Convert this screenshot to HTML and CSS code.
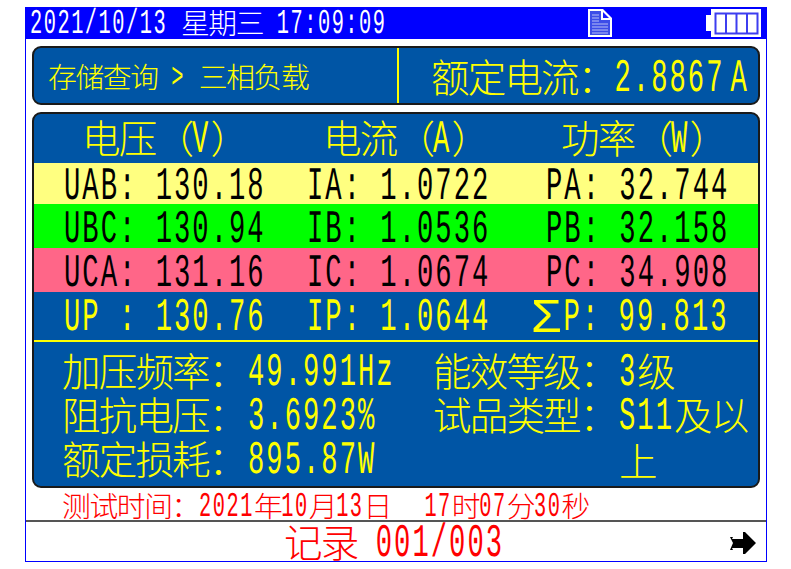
FILE: index.html
```html
<!DOCTYPE html>
<html lang="zh">
<head>
<meta charset="utf-8">
<title>三相负载</title>
<link rel="stylesheet" href="styles.css">
</head>
<body>
<div class="frame">
  <header class="topbar t-sm">
    <div class="clock"><span class="m">2021/10/13 </span>星期三<span class="m"> 17:09:09</span></div>
    <svg class="doc" width="24" height="28" viewBox="0 0 24 28">
      <path d="M0 0H15L24 9V28H0Z" fill="#fff"/>
      <path d="M2 2H13V11H22V26H2Z" fill="#3d4de8"/>
      <path d="M15 3L21 9H15Z" fill="#1a1aff"/>
      <path d="M4 6H11M4 9H11M4 12H11M4 15H20M4 18H20M4 21H20M4 24H20" stroke="#b9c0f5" stroke-width="1"/>
    </svg>
    <svg class="bat" width="55" height="28" viewBox="0 0 55 28">
      <path d="M5 0H55V28H5V22H0V6H5Z" fill="#fff"/>
      <path d="M9.500 4.500H51.500V24.500H9.500ZM20 4.500V24.500M30.500 4.500V24.500M41 4.500V24.500" fill="none" stroke="#3d3df0" stroke-width="2"/>
    </svg>
  </header>

  <section class="panel title">
    <div class="crumb t-sm">存储查询<span class="m"> &gt; </span>三相负载</div>
    <div class="rated t-lg">额定电流：<span class="m">2.8867</span><span class="m unit">A</span></div>
  </section>

  <section class="panel data t-lg">
    <div class="heads">
      <div>电压（<span class="m">V</span>）</div>
      <div>电流（<span class="m">A</span>）</div>
      <div>功率（<span class="m">W</span>）</div>
    </div>
    <div class="row yellow"><div><span class="m">UAB: 130.18</span></div><div><span class="m">IA: 1.0722</span></div><div><span class="m">PA: 32.744</span></div></div>
    <div class="row green"><div><span class="m">UBC: 130.94</span></div><div><span class="m">IB: 1.0536</span></div><div><span class="m">PB: 32.158</span></div></div>
    <div class="row pink"><div><span class="m">UCA: 131.16</span></div><div><span class="m">IC: 1.0674</span></div><div><span class="m">PC: 34.908</span></div></div>
    <div class="row sum"><div><span class="m">UP : 130.76</span></div><div><span class="m">IP: 1.0644</span></div><div><span class="sigma">Σ</span><span class="m">P: 99.813</span></div></div>
    <div class="info">
      <div class="info-col">
        <div class="item"><span>加压频率：</span><span><span class="m">49.991Hz</span></span></div>
        <div class="item"><span>阻抗电压：</span><span><span class="m">3.6923%</span></span></div>
        <div class="item"><span>额定损耗：</span><span><span class="m">895.87W</span></span></div>
      </div>
      <div class="info-col">
        <div class="item"><span>能效等级：</span><span><span class="m">3</span>级</span></div>
        <div class="item"><span>试品类型：</span><span class="wrap"><span class="m">S11</span>及以上</span></div>
      </div>
    </div>
  </section>

  <div class="testtime t-sm">测试时间：<span class="m">2021</span>年<span class="m">10</span>月<span class="m">13</span>日<span class="m gap">  17</span>时<span class="m">07</span>分<span class="m">30</span>秒</div>

  <footer class="record t-lg">
    <div>记录<span class="m"> 001/003</span></div>
    <svg class="arrow" width="26" height="22" viewBox="0 0 26 22">
      <path d="M0 5H3L2 7H13V0H15L26 11L15 22H13V16H2L3 18H0L3 11Z" fill="#000"/>
    </svg>
  </footer>
</div>
</body>
</html>
```
FILE: styles.css
```css
* { box-sizing: border-box; }
html, body { margin: 0; padding: 0; background: #fff; }
body { font-family: "Noto Sans CJK SC", "Liberation Sans", sans-serif; font-weight: 300; }

.frame {
  width: 742px;
  height: 555px;
  margin: 7px 0 0 25px;
  border: 1px solid #0000ff;
  border-top: 0;
  display: flex;
  flex-direction: column;
}

.t-sm { font-size: 28.8px; letter-spacing: -1.4px; }
.t-lg { font-size: 38.5px; letter-spacing: -1.8px; }

.m {
  display: inline-block;
  font-family: "Liberation Mono", monospace;
  font-weight: 400;
  font-size: 0.706em;
  letter-spacing: 0.0746em;
  line-height: 1;
  white-space: pre;
  text-rendering: geometricPrecision;
  transform: scaleY(1.72);
  transform-origin: 0 76.7%;
}

.topbar {
  height: 32px;
  flex: none;
  background: #0000ff;
  color: #fff;
  padding: 0 6px 0 5px;
  display: flex;
  align-items: center;
  line-height: 32px;
  margin: 0 -1px;
}
.clock { white-space: nowrap; }
.doc { margin-left: auto; margin-right: 94px; }
.bat { flex: none; }

.panel {
  margin: 0 6px;
  background: #0055a5;
  border: 2px solid #1a1a1a;
  border-radius: 9px;
  color: #ffff00;
}

.title {
  flex: none;
  height: 59px;
  margin-top: 7px;
  display: flex;
  align-items: center;
}
.crumb { flex: none; width: 363px; padding-left: 14px; line-height: 57px; white-space: nowrap; }
.rated {
  flex: 1;
  min-width: 0;
  height: 55px;
  line-height: 55px;
  border-left: 2px solid #ffff00;
  padding-left: 32px;
  white-space: nowrap;
}
.unit { margin-left: 6px; }

.data {
  flex: none;
  height: 376px;
  margin-top: 7px;
  overflow: hidden;
}
.heads {
  height: 49px;
  line-height: 45px;
  display: grid;
  grid-template-columns: 241px 238px 1fr;
  padding-left: 48px;
}
.row {
  display: grid;
  grid-template-columns: 243px 239px 1fr;
  padding-left: 30px;
  height: 44px;
  line-height: 44px;
  color: #000;
  white-space: nowrap;
}
.yellow { background: #ffff80; height: 41px; line-height: 40px; }
.green { background: #00ff00; }
.pink { background: #ff6688; }
.row.sum {
  color: #ffff00;
  height: 50px;
  line-height: 44px;
  border-bottom: 2px solid #ffff00;
  grid-template-columns: 243px 220px 1fr;
}
.sigma {
  display: inline-block;
  width: 0.95em;
  text-align: center;
  font-family: "Liberation Sans", sans-serif;
  transform: scale(1.3, 1.2);
  transform-origin: 50% 70%;
  line-height: 1;
}

.info {
  display: flex;
  padding: 5px 0 0 28px;
  line-height: 44px;
}
.info-col { flex: none; width: 371px; }
.item { display: flex; height: 44px; }
.item > span:first-child { flex: none; width: 186px; }
.wrap { display: block; width: 135px; }

.testtime {
  flex: none;
  height: 34px;
  line-height: 34px;
  padding-left: 36px;
  color: #ff0000;
  white-space: nowrap;
  border-bottom: 2px solid #555;
}
.gap { margin-left: 6px; }

.record {
  flex: 1;
  display: flex;
  align-items: center;
  padding: 0 10px 0 258px;
  color: #ff0000;
  line-height: 37px;
}
.arrow { margin-left: auto; }
```
